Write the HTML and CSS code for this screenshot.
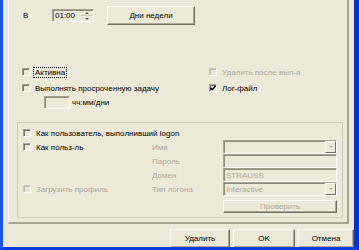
FILE: index.html
```html
<!DOCTYPE html>
<html lang="ru">
<head>
  <meta charset="UTF-8">
  <title>Расписание</title>
  <link rel="stylesheet" href="styles.css">
</head>
<body>
  <div class="window">
    <div class="tabpage">
      <div class="when-row">
        <span class="when-label">В</span>
        <div class="time-box">
          <span class="time-text">01:00</span>
          <span class="spin">
            <span class="spin-half"><span class="arrow-up"></span></span>
            <span class="spin-half"><span class="arrow-down"></span></span>
          </span>
        </div>
        <button class="btn btn-days">Дни недели</button>
      </div>

      <div class="options">
        <div class="check"><span class="cb"></span><span class="focus">Активна</span></div>
        <div class="check disabled"><span class="cb"></span>Удалить после вып-я</div>
        <div class="check"><span class="cb"></span>Выполнять просроченную задачу</div>
        <div class="check">
          <span class="cb"><svg width="6" height="6" viewBox="0 0 6 6"><path d="M0.5 2.8 L2.2 4.6 L5.6 0.8" fill="none" stroke="#000" stroke-width="1.4"/></svg></span>
          Лог-файл
        </div>
        <div class="late-row"><span class="edit late-edit"></span>чч:мм/дни</div>
      </div>

      <div class="group">
        <div class="check span-all"><span class="cb"></span>Как пользователь, выполнивший logon</div>

        <div class="check"><span class="cb"></span>Как польз-ль</div>
        <div class="field-label">Имя</div>
        <div class="edit combo"><span class="combo-text"></span><span class="drop"><span class="arrow-down"></span></span></div>

        <div></div>
        <div class="field-label">Пароль</div>
        <div class="edit"></div>

        <div></div>
        <div class="field-label">Домен</div>
        <div class="edit"><span class="combo-text">STRAUSS</span></div>

        <div class="check disabled"><span class="cb"></span>Загрузить профиль</div>
        <div class="field-label">Тип логона</div>
        <div class="edit combo"><span class="combo-text">Interactive</span><span class="drop"><span class="arrow-down"></span></span></div>

        <button class="btn btn-check" disabled>Проверить</button>
      </div>
    </div>

    <div class="buttons">
      <button class="btn btn-delete">Удалить</button>
      <button class="btn btn-ok">OK</button>
      <button class="btn btn-cancel">Отмена</button>
    </div>
  </div>
</body>
</html>
```

FILE: styles.css
```css
body {
  margin: 0;
  background-color: #ece9d8;
  font-family: "Liberation Sans", Arial, sans-serif;
  font-size: 8px;
  color: #000;
}
.window {
  width: 359px;
  height: 250px;
  box-sizing: border-box;
  border-left: 3px solid #1658ea;
  border-right: 5px solid #0632c8;
  border-bottom: 3px solid #0b3dda;
  overflow: hidden;
}
.tabpage {
  box-sizing: border-box;
  width: 341px;
  height: 224px;
  margin-left: 5px;
  padding-top: 6px;
  border-left: 1px solid #fff;
  border-right: 2px solid #a7a494;
  border-bottom: 2px solid #a7a494;
}

/* top row */
.when-row {
  display: flex;
  align-items: center;
  height: 19px;
  padding-left: 14px;
}
.when-label {
  width: 29px;
}
.time-box {
  display: flex;
  box-sizing: border-box;
  width: 42px;
  height: 13px;
  border: 1px solid;
  border-color: #a5a293 #fff #fff #a5a293;
  box-shadow: inset 1px 1px 0 #8e8b7d;
  margin-right: 13px;
}
.time-text {
  flex: 1;
  padding-left: 2px;
  line-height: 11px;
}
.spin {
  display: flex;
  flex-direction: column;
  width: 12px;
}
.spin-half {
  flex: 1;
  display: flex;
  align-items: center;
  justify-content: center;
  border-bottom: 1px solid #cbc8b8;
}
.spin-half:last-child {
  border-bottom: none;
}

.arrow-up,
.arrow-down {
  width: 0;
  height: 0;
  border-left: 2px solid transparent;
  border-right: 2px solid transparent;
}
.arrow-up {
  border-bottom: 2px solid #555;
}
.arrow-down {
  border-top: 2px solid #555;
}

/* buttons */
.btn {
  box-sizing: border-box;
  padding: 0;
  font-family: inherit;
  font-size: 8px;
  color: #000;
  background-color: #ece9d8;
  border: 1px solid;
  border-color: #fff #716f64 #716f64 #fff;
  box-shadow: inset -1px -1px 0 #aca899;
}
.btn:disabled {
  color: #aca899;
}
.btn-days {
  width: 88px;
  height: 19px;
}

/* check boxes */
.check {
  display: flex;
  align-items: center;
  gap: 5px;
  white-space: nowrap;
}
.cb {
  display: flex;
  align-items: center;
  justify-content: center;
  box-sizing: border-box;
  width: 8px;
  height: 8px;
  flex: none;
  border: 1px solid;
  border-color: #a19e8e #fff #fff #a19e8e;
  box-shadow: inset 1px 1px 0 #77756b;
}
.disabled {
  color: #aca899;
}
.disabled .cb {
  border-color: #cbc8b8 #fff #fff #cbc8b8;
  box-shadow: inset 1px 1px 0 #bdbaa9;
}
.focus {
  margin-left: -2px;
  padding: 0 1px;
  border: 1px dotted #000;
  line-height: 9px;
}

.options {
  display: grid;
  grid-template-columns: 187px auto;
  grid-template-rows: 14px 14px 13px;
  row-gap: 2px;
  margin: 40px 0 0 13px;
}
.late-row {
  display: flex;
  align-items: center;
  gap: 2px;
  padding-left: 22px;
  margin-top: -2px;
}

/* edit fields */
.edit {
  display: flex;
  align-items: center;
  box-sizing: border-box;
  height: 14px;
  border: 1px solid;
  border-color: #a5a293 #fff #fff #a5a293;
  box-shadow: inset 1px 1px 0 #8e8b7d;
  color: #aca899;
}
.late-edit {
  width: 26px;
  height: 13px;
}
.combo-text {
  flex: 1;
  padding-left: 2px;
}
.drop {
  display: flex;
  align-items: center;
  justify-content: center;
  box-sizing: border-box;
  width: 11px;
  height: 12px;
  border: 1px solid;
  border-color: #fff #716f64 #716f64 #fff;
}
.drop .arrow-down {
  border-top-color: #aca899;
}

/* logon group */
.group {
  display: grid;
  grid-template-columns: 129px 71px 114px;
  grid-template-rows: 14px 14px 14px 14px 14px 13px;
  box-sizing: border-box;
  width: 326px;
  height: 96px;
  margin: 12px 0 0 8px;
  padding: 3px 0 0 5px;
  border: 1px solid #cdcab9;
}
.span-all {
  grid-column: 1 / 4;
}
.field-label {
  display: flex;
  align-items: center;
  color: #aca899;
}
.btn-check {
  grid-column: 3;
  margin-top: 4px;
  height: 13px;
}

/* dialog buttons */
.buttons {
  display: flex;
  justify-content: flex-end;
  gap: 3px;
  margin-top: 5px;
}
.buttons .btn {
  height: 19px;
}
.btn-delete {
  width: 60px;
}
.btn-ok {
  width: 62px;
}
.btn-cancel {
  width: 56px;
}
```
